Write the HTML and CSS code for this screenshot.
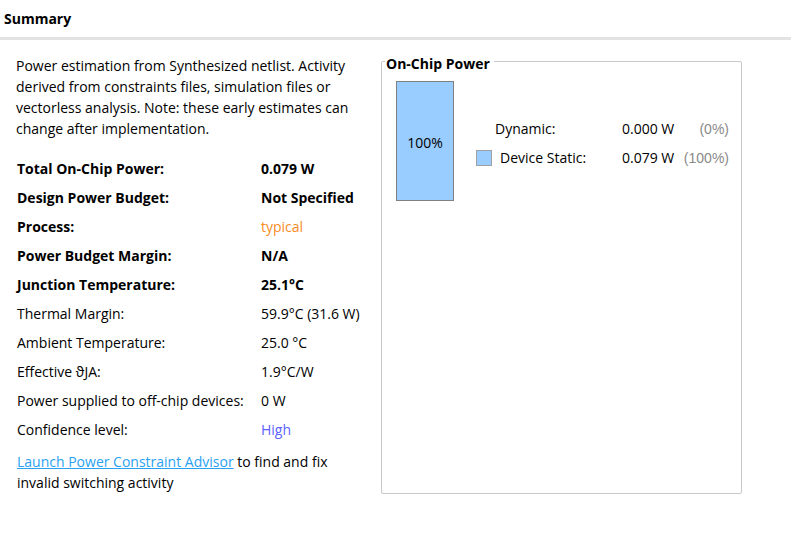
FILE: index.html
```html
<!DOCTYPE html>
<html>
<head>
<meta charset="utf-8">
<link rel="stylesheet" href="styles.css">
</head>
<body>
<div class="header">Summary</div>
<div class="content">
  <div class="left">
    <p class="intro">Power estimation from Synthesized netlist. Activity<br>derived from constraints files, simulation files or<br>vectorless analysis. Note: these early estimates can<br>change after implementation.</p>
    <div class="table">
      <div class="row bold"><span class="lbl">Total On-Chip Power:</span><span class="val">0.079 W</span></div>
      <div class="row bold"><span class="lbl">Design Power Budget:</span><span class="val">Not Specified</span></div>
      <div class="row"><span class="lbl bold">Process:</span><span class="val orange">typical</span></div>
      <div class="row bold"><span class="lbl">Power Budget Margin:</span><span class="val">N/A</span></div>
      <div class="row bold"><span class="lbl">Junction Temperature:</span><span class="val">25.1°C</span></div>
      <div class="row"><span class="lbl">Thermal Margin:</span><span class="val">59.9°C (31.6 W)</span></div>
      <div class="row"><span class="lbl">Ambient Temperature:</span><span class="val">25.0 °C</span></div>
      <div class="row"><span class="lbl">Effective ϑJA:</span><span class="val">1.9°C/W</span></div>
      <div class="row"><span class="lbl">Power supplied to off-chip devices:</span><span class="val">0 W</span></div>
      <div class="row"><span class="lbl">Confidence level:</span><span class="val blue">High</span></div>
    </div>
    <p class="advisor"><a class="link" href="#">Launch Power Constraint Advisor</a> to find and fix<br>invalid switching activity</p>
  </div>
  <fieldset class="chip">
    <legend class="chip-title">On-Chip Power</legend>
    <div class="chart">
      <div class="bar">100%</div>
      <div class="legend">
        <span class="sw-empty"></span><span class="name">Dynamic:</span><span class="num">0.000 W</span><span class="pct">(0%)</span>
        <span class="sw"></span><span class="name static">Device Static:</span><span class="num">0.079 W</span><span class="pct">(100%)</span>
      </div>
    </div>
  </fieldset>
</div>
</body>
</html>
```
FILE: styles.css
```css
html, body {
  margin: 0;
  padding: 0;
  background: #ffffff;
}
body {
  font-family: "Open Sans", "Noto Sans", sans-serif;
  font-size: 14px;
  color: #000;
  width: 791px;
  height: 537px;
  overflow: hidden;
}
.header {
  height: 37px;
  line-height: 37px;
  padding-left: 4px;
  font-weight: 700;
  border-bottom: 3px solid #e3e3e3;
  box-sizing: content-box;
}
.content {
  display: flex;
  align-items: flex-start;
  padding-left: 16px;
}
.left {
  width: 365px;
  flex: none;
}
.intro {
  margin: 15px 0 0 0;
  line-height: 21px;
}
.table {
  margin-top: 15px;
}
.row {
  display: flex;
  height: 29px;
  line-height: 29px;
  padding-left: 1px;
}
.lbl {
  width: 244px;
  flex: none;
  white-space: nowrap;
}
.val {
  white-space: nowrap;
}
.bold {
  font-weight: 700;
}
.orange {
  color: #f98b25;
}
.blue {
  color: #5a62ff;
}
.advisor {
  margin: 7px 0 0 1px;
  line-height: 21px;
}
.link {
  color: #2aa2f2;
  text-decoration: underline;
}
.chip {
  margin: 8px 0 0 0;
  padding: 0 0 0 14px;
  width: 361px;
  height: 446px;
  box-sizing: border-box;
  border: 1px solid #c8c8c8;
  border-radius: 2px;
  min-inline-size: 0;
}
.chip-title {
  font-weight: 700;
  padding: 6px 4px 0 1px;
  margin-left: -11px;
  line-height: 20px;
}
.chart {
  display: flex;
  align-items: center;
  margin-top: 7px;
}
.bar {
  width: 58px;
  height: 120px;
  box-sizing: border-box;
  background: #99ccff;
  border: 1px solid #808080;
  display: flex;
  align-items: center;
  justify-content: center;
  padding-top: 3px;
}
.legend {
  display: grid;
  grid-template-columns: 19px 127px 56px 51px;
  grid-auto-rows: 29px;
  align-items: center;
  margin-left: 22px;
  margin-top: 4px;
}
.sw {
  width: 14px;
  height: 14px;
  background: #99ccff;
  border: 1px solid #a0a0a0;
}
.sw-empty {
  width: 16px;
  height: 16px;
}
.name.static {
  padding-left: 5px;
}
.num {
  white-space: nowrap;
}
.pct {
  text-align: right;
  color: #8a8a8a;
  font-family: "Liberation Sans", Arial, sans-serif;
  font-size: 14px;
  white-space: nowrap;
}
```
